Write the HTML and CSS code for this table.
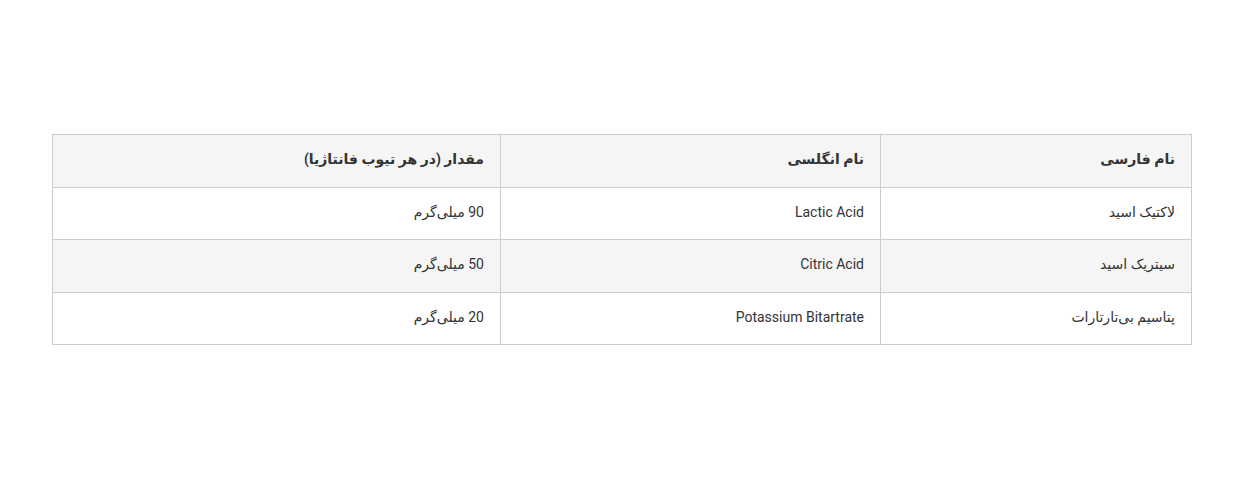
FILE: index.html
```html
<!DOCTYPE html>
<html lang="fa" dir="rtl">
<head>
<meta charset="utf-8">
<link rel="stylesheet" href="styles.css">
</head>
<body>
<div class="wrap">
<table class="tbl">
<thead>
<tr><th class="c1">نام فارسی</th><th class="c2">نام انگلسی</th><th class="c3">مقدار (در هر تیوب فانتاژیا)</th></tr>
</thead>
<tbody>
<tr><td>لاکتیک اسید</td><td>Lactic Acid</td><td>90 میلی‌گرم</td></tr>
<tr class="alt"><td>سیتریک اسید</td><td>Citric Acid</td><td>50 میلی‌گرم</td></tr>
<tr><td>پتاسیم بی‌تارتارات</td><td>Potassium Bitartrate</td><td>20 میلی‌گرم</td></tr>
</tbody>
</table>
</div>
</body>
</html>
```
FILE: styles.css
```css
html, body { margin: 0; padding: 0; background: #fff; }
body { font-family: Roboto, "Noto Sans", "DejaVu Sans", sans-serif; color: #333; }
.wrap { padding: 134px 56px 0 52px; }
.tbl { width: 1140px; border-collapse: collapse; direction: rtl; font-size: 14px; table-layout: fixed; }
.tbl th, .tbl td { border: 1px solid #ccc; padding: 0 16px 3px; height: 48.5px; text-align: right; line-height: 20px; }
.tbl th { background: #f5f5f5; font-weight: 700; color: #333; }
.tbl td { font-weight: 400; color: #333; }
.tbl tr.alt td { background: #f5f5f5; }
.c1 { width: 278px; }
.c2 { width: 347px; }
.c3 { width: auto; }
```
